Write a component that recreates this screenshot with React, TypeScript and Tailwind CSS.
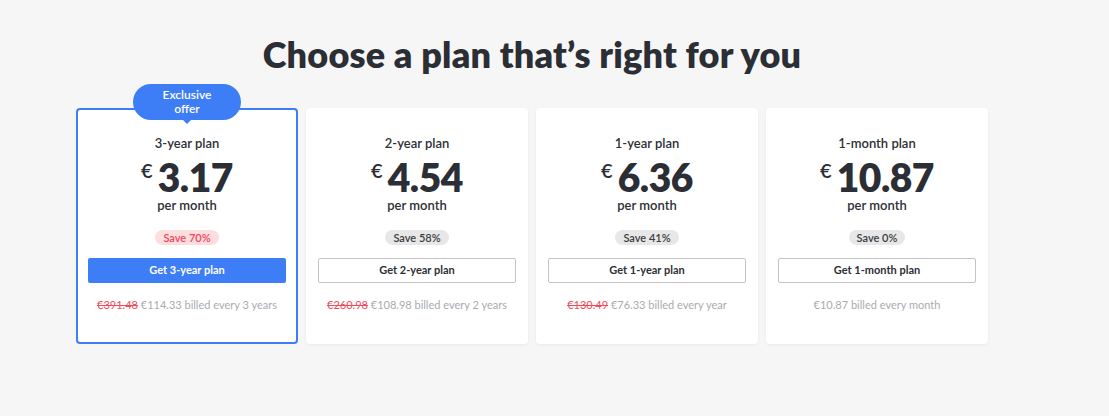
import React from 'react';

type Plan = {
    name: string;
    price: string;
    save: string;
    cta: string;
    oldPrice?: string;
    billed: string;
    featured?: boolean;
};

const plans: Plan[] = [
    { name: '3-year plan', price: '3.17', save: 'Save 70%', cta: 'Get 3-year plan', oldPrice: '€391.48', billed: '€114.33 billed every 3 years', featured: true },
    { name: '2-year plan', price: '4.54', save: 'Save 58%', cta: 'Get 2-year plan', oldPrice: '€260.98', billed: '€108.98 billed every 2 years' },
    { name: '1-year plan', price: '6.36', save: 'Save 41%', cta: 'Get 1-year plan', oldPrice: '€130.49', billed: '€76.33 billed every year' },
    { name: '1-month plan', price: '10.87', save: 'Save 0%', cta: 'Get 1-month plan', billed: '€10.87 billed every month' },
];

function PlanCard({ plan }: { plan: Plan }) {
    return (
        <div
            className={`relative w-[222px] h-[236px] rounded-[4px] bg-white flex flex-col items-center ${
                plan.featured ? 'border-2 border-[#3d7ef6] pt-[24px]' : 'shadow-[0_1px_3px_rgba(0,0,0,0.06)] pt-[26px]'
            }`}
        >
            {plan.featured && (
                <div className="absolute -top-[26px] left-1/2 -translate-x-1/2 w-[108px] h-[36px] rounded-[18px] bg-[#3d7ef6] text-white text-[12px] leading-[14px] font-semibold flex items-center justify-center text-center">
                    Exclusive<br />offer
                    <span className="absolute left-1/2 -translate-x-1/2 -bottom-[4px] w-0 h-0 border-l-[5px] border-r-[5px] border-t-[5px] border-l-transparent border-r-transparent border-t-[#3d7ef6]" />
                </div>
            )}
            <div className="text-[13px] leading-[18px] font-semibold text-[#2d3036]">{plan.name}</div>
            <div className="flex items-start mt-[6px] text-[#2b2e34]">
                <span className="text-[20px] leading-[20px] font-semibold mt-[2px] mr-[5px]">€</span>
                <span className="text-[39px] leading-[38px] font-extrabold tracking-[-0.5px]">{plan.price}</span>
            </div>
            <div className="text-[13px] leading-[18px] font-semibold text-[#2d3036]">per month</div>
            <div
                className={`mt-[16px] h-[15px] px-[8px] rounded-full text-[11px] leading-[15px] font-semibold ${
                    plan.featured ? 'bg-[#fcdde0] text-[#ef4757]' : 'bg-[#e7e7e8] text-[#3b3d42]'
                }`}
            >
                {plan.save}
            </div>
            <button
                className={`mt-[13px] w-[198px] h-[25px] rounded-[2px] text-[11px] font-bold ${
                    plan.featured ? 'bg-[#3d7ef6] text-white' : 'bg-white border border-[#c4c4c6] text-[#2d3036]'
                }`}
            >
                {plan.cta}
            </button>
            <div className="mt-[14px] text-[11px] leading-[16px] text-[#a9abaf]">
                {plan.oldPrice && <span className="text-[#f04a5a] line-through">{plan.oldPrice}</span>}
                {plan.oldPrice && ' '}
                {plan.billed}
            </div>
        </div>
    );
}

export default function App() {
    return (
        <div className="w-[1109px] h-[416px] bg-[#f6f6f6] font-['Lato',sans-serif] overflow-hidden">
            <div className="ml-[76px] w-[912px] flex flex-col items-center">
                <h1 className="mt-[30px] text-[36px] leading-[48px] font-extrabold text-[#2b2e34] tracking-[0.2px]">
                    Choose a plan that’s right for you
                </h1>
                <div className="mt-[30px] flex gap-[8px]">
                    {plans.map(p => (
                        <PlanCard key={p.name} plan={p} />
                    ))}
                </div>
            </div>
        </div>
    );
}
